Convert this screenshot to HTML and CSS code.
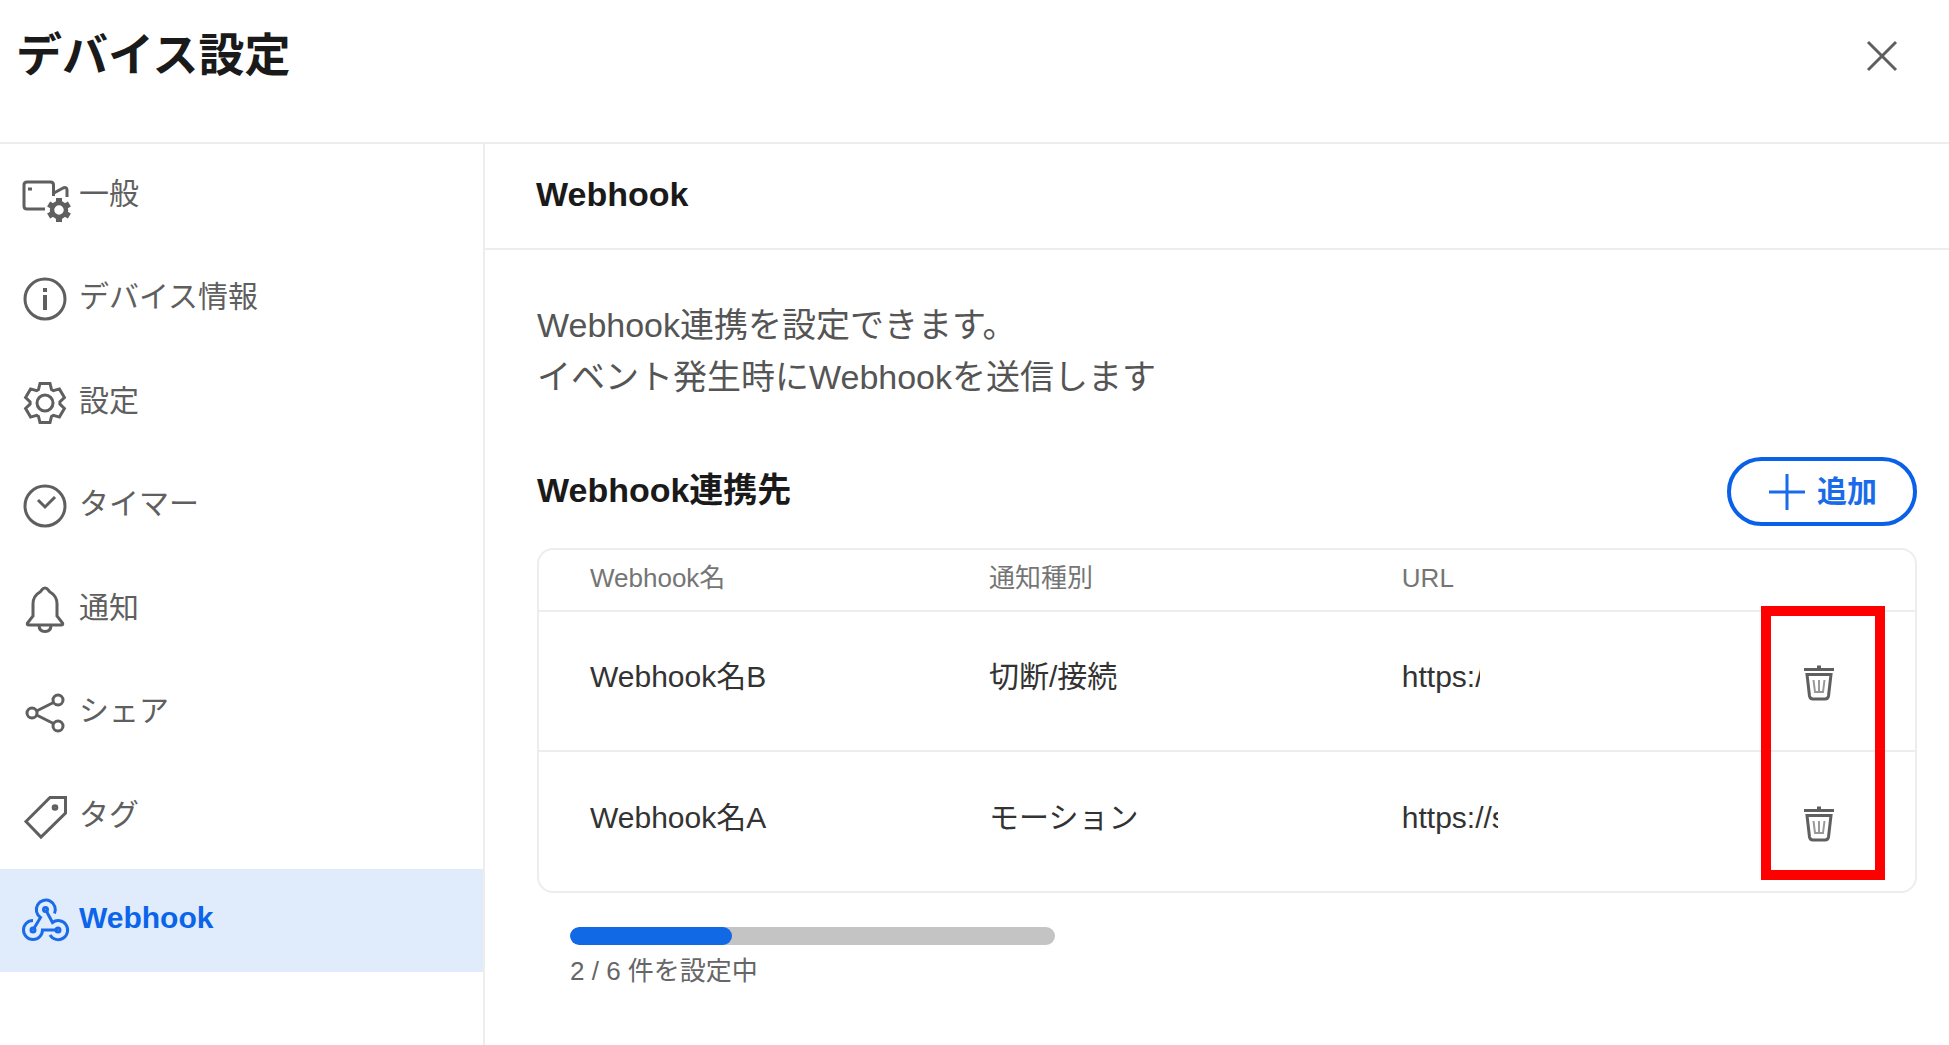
FILE: index.html
```html
<!DOCTYPE html>
<html lang="ja">
<head>
  <meta charset="UTF-8">
  <title>デバイス設定</title>
  <link rel="stylesheet" href="styles.css">
</head>
<body>
  <header class="page-header">
    <h1>デバイス設定</h1>
    <button class="close-button" type="button" aria-label="閉じる">
      <svg width="32" height="32" viewBox="0 0 32 32"><path d="M2 2l28 28M30 2L2 30"/></svg>
    </button>
  </header>

  <div class="layout">
    <nav class="sidebar">
      <a href="#" class="menu-item">
        <svg class="icon" viewBox="0 0 50 56">
          <path d="M24 41H6q-3 0-3-3V17q0-3 3-3h23.500q3 0 3 3v11M33 25l9-5q4-1.500 4 2v7"/>
          <path d="M7 21h4"/>
          <g transform="translate(38 42)">
            <circle r="7" stroke-width="4.500"/>
            <g stroke-width="6">
              <path d="M0-12v4"/>
              <path d="M0-12v4" transform="rotate(60)"/>
              <path d="M0-12v4" transform="rotate(120)"/>
              <path d="M0-12v4" transform="rotate(180)"/>
              <path d="M0-12v4" transform="rotate(240)"/>
              <path d="M0-12v4" transform="rotate(300)"/>
            </g>
          </g>
        </svg>
        <span>一般</span>
      </a>
      <a href="#" class="menu-item">
        <svg class="icon" viewBox="0 0 50 56">
          <circle cx="24" cy="28" r="20"/>
          <path d="M24 24v15M24 17v4" stroke-width="4"/>
        </svg>
        <span>デバイス情報</span>
      </a>
      <a href="#" class="menu-item">
        <svg class="icon" viewBox="0 0 50 56">
          <g transform="translate(24 28)">
            <circle r="8"/>
            <path d="M-6.500-13.500L-5-19.500H5L6.500-13.500L8.400-12.400L14.400-14.100L19.400-5.400L14.900-1.100V1.100L19.400 5.400L14.400 14.100L8.400 12.400L6.500 13.500L5 19.500H-5L-6.500 13.500L-8.400 12.400L-14.400 14.100L-19.400 5.400L-14.900 1.100V-1.100L-19.400-5.400L-14.400-14.100L-8.400-12.400Z"/>
          </g>
        </svg>
        <span>設定</span>
      </a>
      <a href="#" class="menu-item">
        <svg class="icon" viewBox="0 0 50 56">
          <circle cx="24" cy="28" r="20"/>
          <path d="M17 22l7 7 10-10"/>
        </svg>
        <span>タイマー</span>
      </a>
      <a href="#" class="menu-item">
        <svg class="icon" viewBox="0 0 50 56">
          <path d="M24 6c-3 0-3 2.500-5 4C14.500 12.500 12 17 12 22V34L6.500 41q-1 2 1.500 2H40q2.500 0 1.500-2L36 34V22c0-5-2.500-9.500-7-12c-2-1.500-2-4-5-4Z"/>
          <path d="M18 43q0 6.500 6 6.500t6-6.500"/>
        </svg>
        <span>通知</span>
      </a>
      <a href="#" class="menu-item">
        <svg class="icon" viewBox="0 0 50 56">
          <circle cx="11" cy="28" r="5"/>
          <circle cx="37" cy="15" r="5"/>
          <circle cx="37" cy="41" r="5"/>
          <path d="M15.500 26L32.500 17.500M15.500 30L32.500 38.500"/>
        </svg>
        <span>シェア</span>
      </a>
      <a href="#" class="menu-item">
        <svg class="icon" viewBox="0 0 50 56">
          <path d="M29 8.500H44.500V24L20 48L5 32.500Z"/>
          <circle cx="34" cy="18.500" r="1.800"/>
        </svg>
        <span>タグ</span>
      </a>
      <a href="#" class="menu-item active">
        <svg class="icon" viewBox="0 0 50 56">
          <path d="M33.500 21.500A9.500 9.500 0 1 0 19.500 25.500L12 38"/>
          <path d="M12 28.500A9.500 9.500 0 1 0 21.500 38H37"/>
          <path d="M29 43A9.500 9.500 0 1 0 31.500 30.500L24.500 17.500"/>
          <circle cx="24.500" cy="17.500" r="2"/>
          <circle cx="12" cy="38" r="2"/>
          <circle cx="37" cy="38" r="2"/>
        </svg>
        <span>Webhook</span>
      </a>
    </nav>

    <main class="content">
      <h2 class="content-title">Webhook</h2>

      <div class="content-body">
        <p class="description">Webhook連携を設定できます。<br>イベント発生時にWebhookを送信します</p>

        <div class="list-header">
          <h3>Webhook連携先</h3>
          <button class="add-button" type="button">
            <svg width="36" height="36" viewBox="0 0 36 36"><path d="M18 0v36M0 18h36"/></svg>
            <span>追加</span>
          </button>
        </div>

        <div class="table-box">
          <table>
            <thead>
              <tr>
                <th class="col-name">Webhook名</th>
                <th class="col-type">通知種別</th>
                <th class="col-url">URL</th>
                <th class="col-delete"></th>
              </tr>
            </thead>
            <tbody>
              <tr>
                <td>Webhook名B</td>
                <td>切断/接続</td>
                <td><div class="url url-b">https:/</div></td>
                <td class="col-delete">
                  <button class="delete-button" type="button" aria-label="Webhook名Bを削除">
                    <svg width="32" height="36" viewBox="0 0 32 36">
                      <path d="M1 4.500h30M14 2h4"/>
                      <path d="M4 9.500H28L25.500 31q-.5 3-3.500 3H10q-3 0-3.500-3Z"/>
                      <path class="thin" d="M10.500 15l1.500 12h8l1.500-12M16 15v12"/>
                    </svg>
                  </button>
                </td>
              </tr>
              <tr>
                <td>Webhook名A</td>
                <td>モーション</td>
                <td><div class="url url-a">https://s</div></td>
                <td class="col-delete">
                  <button class="delete-button" type="button" aria-label="Webhook名Aを削除">
                    <svg width="32" height="36" viewBox="0 0 32 36">
                      <path d="M1 4.500h30M14 2h4"/>
                      <path d="M4 9.500H28L25.500 31q-.5 3-3.500 3H10q-3 0-3.500-3Z"/>
                      <path class="thin" d="M10.500 15l1.500 12h8l1.500-12M16 15v12"/>
                    </svg>
                  </button>
                </td>
              </tr>
            </tbody>
          </table>
          <div class="highlight"></div>
        </div>

        <div class="usage">
          <progress id="usage-bar" value="2" max="6"></progress>
          <label for="usage-bar">2 / 6 件を設定中</label>
        </div>
      </div>
    </main>
  </div>
</body>
</html>
```
FILE: styles.css
```css
* {
  box-sizing: border-box;
}

body {
  margin: 0;
  min-height: 100vh;
  display: flex;
  flex-direction: column;
  background-color: #fff;
  color: #1a1a1a;
  font-family: "Liberation Sans", "Noto Sans CJK JP", sans-serif;
}

h1, h2, h3, p {
  margin: 0;
}

button {
  background: none;
  border: none;
  padding: 0;
  cursor: pointer;
  font-family: inherit;
}

svg {
  display: block;
  fill: none;
  stroke: #5f5f5f;
  stroke-width: 3;
}

.page-header {
  display: flex;
  justify-content: space-between;
  align-items: flex-start;
  padding: 22px 51px 54px 16px;
  border-bottom: 2px solid #ededed;
}

.page-header h1 {
  font-size: 46px;
  line-height: 66px;
}

.close-button {
  margin-top: 18px;
}

.layout {
  display: flex;
  flex: 1;
}

/* Menu lateral */
.sidebar {
  flex: 0 0 485px;
  display: grid;
  grid-template-rows: repeat(8, 1fr);
  align-self: stretch;
  padding-bottom: 73px;
  border-right: 2px solid #ededed;
}

.menu-item {
  display: flex;
  align-items: center;
  gap: 8px;
  padding-left: 21px;
  color: #5f5f5f;
  font-size: 30px;
  line-height: 44px;
  text-decoration: none;
}

.menu-item span {
  padding-bottom: 4px;
}

.icon {
  width: 50px;
  height: 56px;
}

.menu-item.active {
  background-color: #e0ebfc;
  color: #0a65ea;
  font-weight: bold;
}

.menu-item.active .icon {
  stroke: #1a6bea;
}

.content {
  flex: 1;
  min-width: 0;
}

.content-title {
  padding: 24px 51px 28px;
  font-size: 34px;
  line-height: 52px;
  border-bottom: 2px solid #ededed;
}

.content-body {
  padding: 49px 32px 40px 52px;
}

.description {
  color: #555;
  font-size: 34px;
  line-height: 52px;
}

.list-header {
  display: flex;
  justify-content: space-between;
  align-items: center;
  margin: 54px 0 22px;
}

.list-header h3 {
  padding-bottom: 4px;
  font-size: 34px;
  line-height: 52px;
}

.add-button {
  display: flex;
  align-items: center;
  gap: 12px;
  height: 69px;
  padding: 0 36px 0 38px;
  border: 4px solid #0a61e8;
  border-radius: 35px;
  color: #1a6bea;
  font-size: 30px;
  font-weight: bold;
}

.add-button span {
  padding-bottom: 6px;
}

.add-button svg {
  stroke: #1a6bea;
}

.table-box {
  position: relative;
  border: 2px solid #ededed;
  border-radius: 16px;
}

table {
  width: 100%;
  table-layout: fixed;
  border-collapse: collapse;
}

th, td {
  padding: 0 0 4px 51px;
  text-align: left;
}

th {
  height: 61px;
  color: #757575;
  font-size: 26px;
  font-weight: normal;
  line-height: 40px;
}

td {
  height: 140px;
  padding-bottom: 8px;
  border-top: 2px solid #ededed;
  color: #333;
  font-size: 30px;
  line-height: 44px;
}

.col-name {
  width: 29%;
}

.col-type {
  width: 30%;
}

.col-url {
  width: 27%;
}

.col-delete {
  width: 14%;
  padding: 0;
  text-align: center;
}

.delete-button {
  vertical-align: middle;
}

.thin {
  stroke: #999;
  stroke-width: 2;
}

.url {
  overflow: hidden;
  white-space: nowrap;
}

.url-b {
  width: 78px;
}

.url-a {
  width: 96px;
}

/* Destaque dos botões de excluir */
.highlight {
  position: absolute;
  top: 56px;
  bottom: 11px;
  right: 30px;
  width: 124px;
  border: 10px solid #f00;
  pointer-events: none;
}

.usage {
  display: flex;
  flex-direction: column;
  align-items: flex-start;
  gap: 6px;
  margin: 34px 0 0 33px;
  color: #666;
  font-size: 26px;
  line-height: 40px;
}

progress {
  appearance: none;
  width: 36%;
  height: 18px;
  border: none;
  border-radius: 9px;
  overflow: hidden;
}

progress::-webkit-progress-bar {
  background-color: #c4c4c4;
}

progress::-webkit-progress-value {
  background-color: #1269e6;
  border-radius: 9px;
}
```
